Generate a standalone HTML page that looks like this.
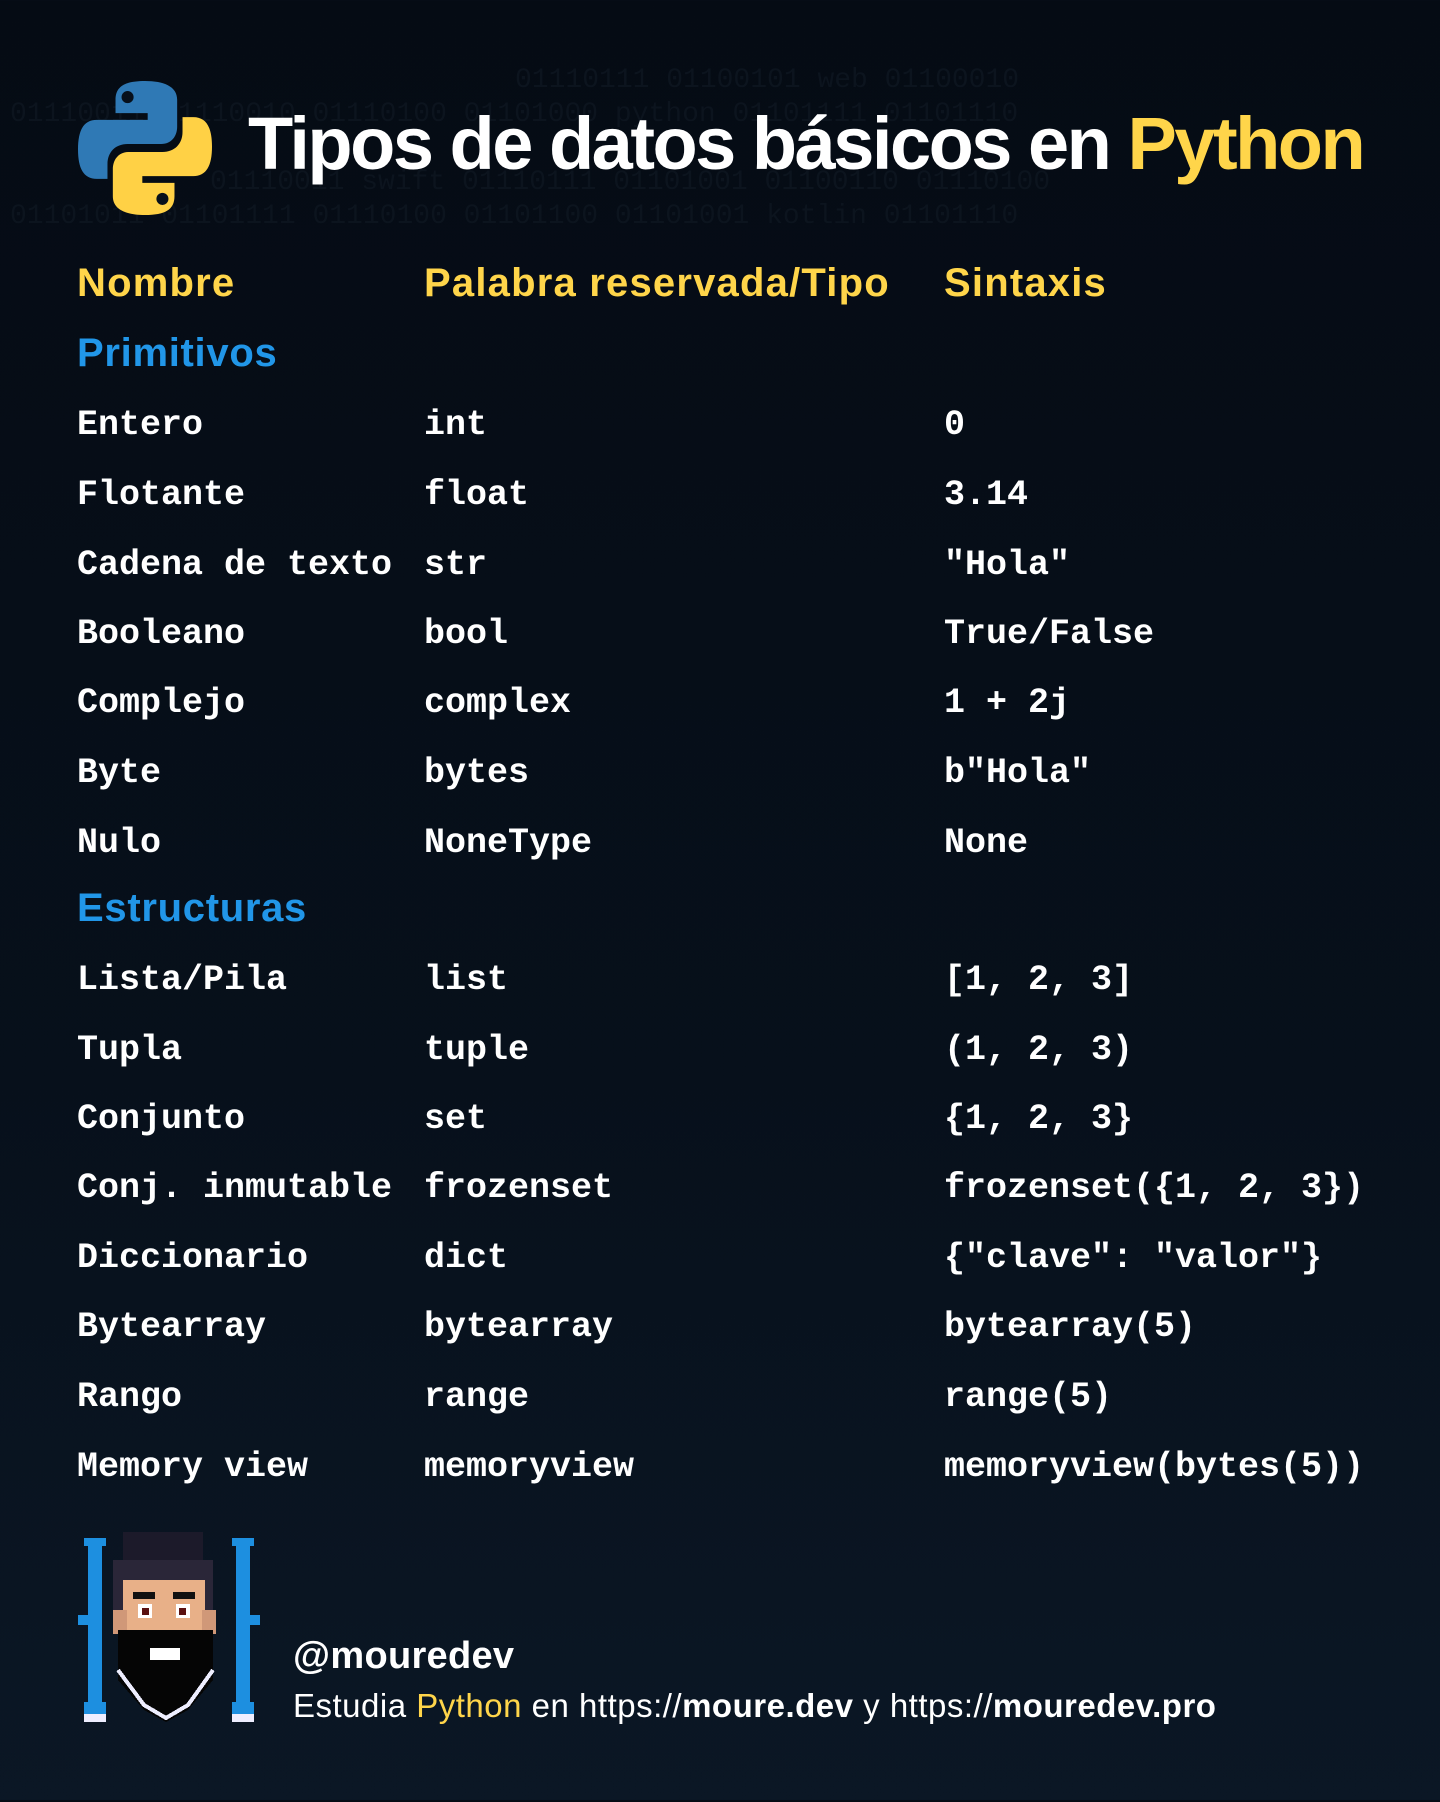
<!DOCTYPE html>
<html><head><meta charset="utf-8"><style>
*{margin:0;padding:0;box-sizing:border-box}
body{width:1440px;height:1800px;overflow:hidden;background:linear-gradient(#050b14 0%,#07101b 60%,#0b1725 100%);position:relative;font-family:"Liberation Sans",sans-serif}
.bin{position:absolute;font-family:"Liberation Mono",monospace;font-size:28px;color:#0c141e;white-space:pre;line-height:34px}
.t{position:absolute;white-space:nowrap}
h1{position:absolute;left:248px;top:100px;font-size:74px;font-weight:bold;color:#fff;letter-spacing:-2.5px;white-space:nowrap;line-height:88px}
.y{color:#ffd54a}
.hd{font-size:40px;font-weight:bold;color:#ffd54a;letter-spacing:1.2px;line-height:44px}
.sec{font-size:40px;font-weight:bold;color:#2196e8;letter-spacing:0.7px;line-height:44px}
.m{font-family:"Liberation Mono",monospace;font-weight:bold;font-size:35px;color:#fff;line-height:40px}
.r{position:absolute;left:0;top:2px;width:1440px;height:1800px}
</style></head><body>
<div class="bin" style="left:515px;top:64px">01110111 01100101 web 01100010</div>
<div class="bin" style="left:10px;top:98px">01110011 01110010 01110100 01101000 python 01101111 01101110</div>
<div class="bin" style="left:210px;top:166px">01110011 swift 01110111 01101001 01100110 01110100</div>
<div class="bin" style="left:10px;top:200px">01101011 01101111 01110100 01101100 01101001 kotlin 01101110</div>

<svg style="position:absolute;left:77px;top:81px" width="136" height="134" viewBox="0 0 100 100">
<path d="M50 0 C35 0 28 4 28 14 V24 H52 V29 H14 C4 29 0 37 0 51 C0 65 4 73 14 73 H22 V62 C22 53 28 47 37 47 H62 C70 47 74 41 74 34 V14 C74 4 64 0 50 0 Z" fill="#2f79b5"/>
<circle cx="37" cy="12" r="4.5" fill="#07101b"/>
<g transform="rotate(180 50 50)">
<path d="M50 0 C35 0 28 4 28 14 V24 H52 V29 H14 C4 29 0 37 0 51 C0 65 4 73 14 73 H22 V62 C22 53 28 47 37 47 H62 C70 47 74 41 74 34 V14 C74 4 64 0 50 0 Z" fill="#ffd145"/>
<circle cx="37" cy="12" r="4.5" fill="#07101b"/></g>
</svg>
<h1>Tipos de datos básicos en <span class="y">Python</span></h1>

<div class="t hd" style="left:77px;top:261px">Nombre</div>
<div class="t hd" style="left:424px;top:261px">Palabra reservada/Tipo</div>
<div class="t hd" style="left:944px;top:261px">Sintaxis</div>
<div class="t sec" style="left:77px;top:331px">Primitivos</div>
<div class="t sec" style="left:77px;top:886px">Estructuras</div>

<div class="r">
<div class="t m" style="left:77px;top:403px">Entero</div><div class="t m" style="left:424px;top:403px">int</div><div class="t m" style="left:944px;top:403px">0</div>
<div class="t m" style="left:77px;top:473px">Flotante</div><div class="t m" style="left:424px;top:473px">float</div><div class="t m" style="left:944px;top:473px">3.14</div>
<div class="t m" style="left:77px;top:543px">Cadena de texto</div><div class="t m" style="left:424px;top:543px">str</div><div class="t m" style="left:944px;top:543px">"Hola"</div>
<div class="t m" style="left:77px;top:612px">Booleano</div><div class="t m" style="left:424px;top:612px">bool</div><div class="t m" style="left:944px;top:612px">True/False</div>
<div class="t m" style="left:77px;top:681px">Complejo</div><div class="t m" style="left:424px;top:681px">complex</div><div class="t m" style="left:944px;top:681px">1 + 2j</div>
<div class="t m" style="left:77px;top:751px">Byte</div><div class="t m" style="left:424px;top:751px">bytes</div><div class="t m" style="left:944px;top:751px">b"Hola"</div>
<div class="t m" style="left:77px;top:821px">Nulo</div><div class="t m" style="left:424px;top:821px">NoneType</div><div class="t m" style="left:944px;top:821px">None</div>

<div class="t m" style="left:77px;top:958px">Lista/Pila</div><div class="t m" style="left:424px;top:958px">list</div><div class="t m" style="left:944px;top:958px">[1, 2, 3]</div>
<div class="t m" style="left:77px;top:1028px">Tupla</div><div class="t m" style="left:424px;top:1028px">tuple</div><div class="t m" style="left:944px;top:1028px">(1, 2, 3)</div>
<div class="t m" style="left:77px;top:1097px">Conjunto</div><div class="t m" style="left:424px;top:1097px">set</div><div class="t m" style="left:944px;top:1097px">{1, 2, 3}</div>
<div class="t m" style="left:77px;top:1166px">Conj. inmutable</div><div class="t m" style="left:424px;top:1166px">frozenset</div><div class="t m" style="left:944px;top:1166px">frozenset({1, 2, 3})</div>
<div class="t m" style="left:77px;top:1236px">Diccionario</div><div class="t m" style="left:424px;top:1236px">dict</div><div class="t m" style="left:944px;top:1236px">{"clave": "valor"}</div>
<div class="t m" style="left:77px;top:1305px">Bytearray</div><div class="t m" style="left:424px;top:1305px">bytearray</div><div class="t m" style="left:944px;top:1305px">bytearray(5)</div>
<div class="t m" style="left:77px;top:1375px">Rango</div><div class="t m" style="left:424px;top:1375px">range</div><div class="t m" style="left:944px;top:1375px">range(5)</div>
<div class="t m" style="left:77px;top:1445px">Memory view</div><div class="t m" style="left:424px;top:1445px">memoryview</div><div class="t m" style="left:944px;top:1445px">memoryview(bytes(5))</div>
</div>

<svg style="position:absolute;left:78px;top:1530px" width="190" height="200" viewBox="0 0 190 200" shape-rendering="crispEdges">
<rect x="10" y="10" width="14" height="170" fill="#1d8fe0"/><rect x="6" y="8" width="22" height="8" fill="#1d8fe0"/><rect x="6" y="172" width="22" height="12" fill="#1d8fe0"/><rect x="0" y="85" width="12" height="10" fill="#1d8fe0"/><rect x="6" y="184" width="22" height="8" fill="#eef"/>
<rect x="158" y="10" width="14" height="170" fill="#1d8fe0"/><rect x="154" y="8" width="22" height="8" fill="#1d8fe0"/><rect x="154" y="172" width="22" height="12" fill="#1d8fe0"/><rect x="170" y="85" width="12" height="10" fill="#1d8fe0"/><rect x="154" y="184" width="22" height="8" fill="#eef"/>
<rect x="45" y="2" width="80" height="50" fill="#1c1a2a"/><rect x="35" y="30" width="100" height="60" fill="#2a2638"/>
<rect x="45" y="50" width="82" height="70" fill="#e8b088"/><rect x="35" y="80" width="14" height="24" fill="#d09878"/><rect x="124" y="80" width="14" height="24" fill="#d09878"/>
<rect x="55" y="62" width="22" height="7" fill="#111"/><rect x="95" y="62" width="22" height="7" fill="#111"/>
<rect x="60" y="74" width="14" height="14" fill="#fff"/><rect x="98" y="74" width="14" height="14" fill="#fff"/><rect x="64" y="78" width="7" height="7" fill="#5a1010"/><rect x="101" y="78" width="7" height="7" fill="#5a1010"/>
<path d="M40 100 H135 V150 L110 180 L88 192 L66 180 L40 150 Z" fill="#050505"/>
<path d="M40 140 L66 175 L88 188 L110 175 L135 140" fill="none" stroke="#eef" stroke-width="4"/>
<rect x="72" y="118" width="30" height="12" fill="#fff"/>
</svg>
<div class="t" style="left:293px;top:1634px;font-size:38px;font-weight:bold;color:#fff;letter-spacing:0.3px;line-height:44px">@mouredev</div>
<div class="t" style="left:293px;top:1687px;font-size:33px;color:#fff;letter-spacing:0.5px;line-height:38px">Estudia <span class="y">Python</span> en https://<b>moure.dev</b> y https://<b>mouredev.pro</b></div>
</body></html>
